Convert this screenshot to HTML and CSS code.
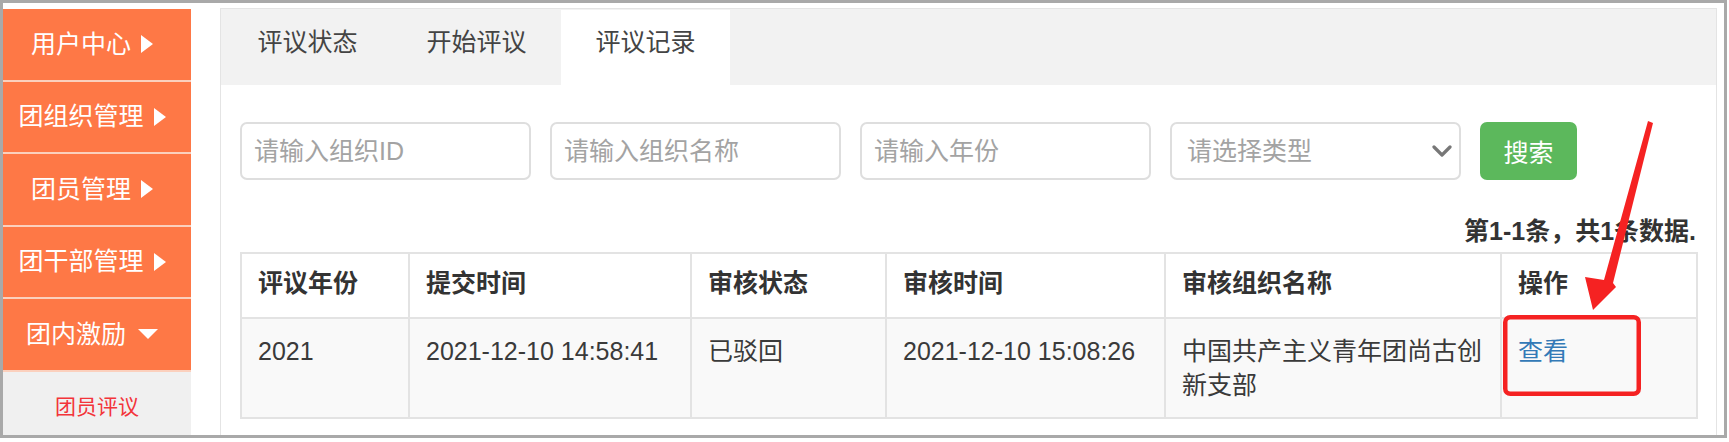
FILE: index.html
```html
<!DOCTYPE html>
<html lang="zh-CN">
<head>
    <meta charset="UTF-8">
    <meta name="viewport" content="width=device-width, initial-scale=1.0">
    <title>评议记录</title>
    <link rel="stylesheet" href="styles.css">
</head>
<body>
    <div class="frame">
        <aside class="sidebar">
            <div class="nav-item">用户中心<span class="caret-right"></span></div>
            <div class="nav-item">团组织管理<span class="caret-right"></span></div>
            <div class="nav-item">团员管理<span class="caret-right"></span></div>
            <div class="nav-item">团干部管理<span class="caret-right"></span></div>
            <div class="nav-item">团内激励<span class="caret-down"></span></div>
            <div class="sub-item">团员评议</div>
        </aside>

        <main class="panel">
            <div class="tabs">
                <div class="tab">评议状态</div>
                <div class="tab">开始评议</div>
                <div class="tab active">评议记录</div>
            </div>

            <div class="content">
                <form class="search" onsubmit="return false">
                    <input type="text" placeholder="请输入组织ID">
                    <input type="text" placeholder="请输入组织名称">
                    <input type="text" placeholder="请输入年份">
                    <div class="select-wrap">
                        <select>
                            <option>请选择类型</option>
                        </select>
                        <svg class="chevron" width="20" height="12" viewBox="0 0 20 12">
                            <polyline points="2,2 10,10 18,2" fill="none" stroke="#777" stroke-width="3.2" stroke-linecap="round" stroke-linejoin="round"/>
                        </svg>
                    </div>
                    <button type="submit">搜索</button>
                </form>

                <div class="summary">第1-1条，共1条数据.</div>

                <table class="records">
                    <colgroup>
                        <col style="width:168px">
                        <col style="width:282px">
                        <col style="width:195px">
                        <col style="width:279px">
                        <col style="width:336px">
                        <col style="width:196px">
                    </colgroup>
                    <thead>
                        <tr>
                            <th>评议年份</th>
                            <th>提交时间</th>
                            <th>审核状态</th>
                            <th>审核时间</th>
                            <th>审核组织名称</th>
                            <th>操作</th>
                        </tr>
                    </thead>
                    <tbody>
                        <tr>
                            <td>2021</td>
                            <td>2021-12-10 14:58:41</td>
                            <td>已驳回</td>
                            <td>2021-12-10 15:08:26</td>
                            <td>中国共产主义青年团尚古创新支部</td>
                            <td><a href="#">查看</a></td>
                        </tr>
                    </tbody>
                </table>
            </div>
        </main>
    </div>

    <!-- annotation drawn over the screenshot -->
    <svg class="annotation" width="1729" height="442" viewBox="0 0 1729 442">
        <rect x="1505.25" y="317.25" width="133.5" height="76.5" rx="5" fill="none" stroke="#f52222" stroke-width="4.5"/>
        <polygon points="1648,121 1653,123 1613,283 1616,287 1593,310 1585,277 1604,280" fill="#f52222"/>
    </svg>
</body>
</html>
```

FILE: styles.css
```css
html, body { margin: 0; padding: 0; background: #fff; }
body { font-family: "Liberation Sans", "Noto Sans CJK SC", sans-serif; font-size: 25px; color: #333; position: relative; width: 1729px; height: 442px; overflow: hidden; }

.frame { width: 1727px; height: 438px; box-sizing: border-box; border: 3px solid #a9a9a9; display: flex; align-items: flex-start; overflow: hidden; background: #fff; }

/* sidebar */
.sidebar { width: 188px; margin-top: 6px; flex-shrink: 0; }
.nav-item { height: 70.5px; border-bottom: 2px solid #fbd0bd; background: #fe7846; color: #fff; display: flex; align-items: center; justify-content: center; padding-right: 10px; line-height: 1; }
.caret-right { width: 0; height: 0; margin-left: 10px; border-left: 12px solid #fff; border-top: 9px solid transparent; border-bottom: 9px solid transparent; }
.caret-down { width: 0; height: 0; margin-left: 12px; border-top: 10px solid #fff; border-left: 10px solid transparent; border-right: 10px solid transparent; }
.sub-item { height: 80px; line-height: 70px; background: #f0f0f0; color: #f3343a; font-size: 21px; text-align: center; }

/* main panel */
.panel { width: 1497px; height: 460px; margin-left: 29px; margin-top: 5px; box-sizing: border-box; border: 1px solid #e4e4e4; flex-shrink: 0; }
.tabs { height: 76px; box-sizing: border-box; padding: 1px 0 0 2px; background: #f2f2f2; display: flex; }
.tab { width: 169px; height: 75px; line-height: 65px; text-align: center; color: #444; }
.tab.active { background: #fff; }

.content { padding: 37px 20px 0 19px; }

.search { display: flex; align-items: center; margin: 0; }
.search input,
.search select {
    width: 291px;
    height: 58px;
    box-sizing: border-box;
    border: 2px solid #dedede;
    border-radius: 7px;
    padding: 0 12px;
    font: inherit;
    color: #555;
    background: #fff;
    margin-right: 19px;
    outline: none;
}
.search input::placeholder { color: #a3a3a3; }
.select-wrap { position: relative; }
.search select { appearance: none; -webkit-appearance: none; padding-left: 15px; color: #a3a3a3; display: block; }
.chevron { position: absolute; right: 28px; top: 23px; }
.search button { width: 97px; height: 58px; border: none; border-radius: 7px; background: #5cb85c; color: #fff; font: inherit; cursor: pointer; }

.summary { margin-top: 34px; line-height: 34px; text-align: right; font-weight: bold; color: #333; }

.records { margin-top: 4px; width: 1456px; table-layout: fixed; border-collapse: collapse; border: 2px solid #e3e3e3; }
.records th { text-align: left; font-weight: bold; padding: 12px 16px 17px; line-height: 34px; border: 2px solid #e3e3e3; vertical-align: bottom; background: #fff; }
.records td { padding: 15px 16px; line-height: 34px; border: 2px solid #e3e3e3; vertical-align: top; background: #f9f9f9; color: #3a3a3a; }
.records a { color: #337ab7; text-decoration: none; }

.annotation { position: absolute; left: 0; top: 0; pointer-events: none; }
```
